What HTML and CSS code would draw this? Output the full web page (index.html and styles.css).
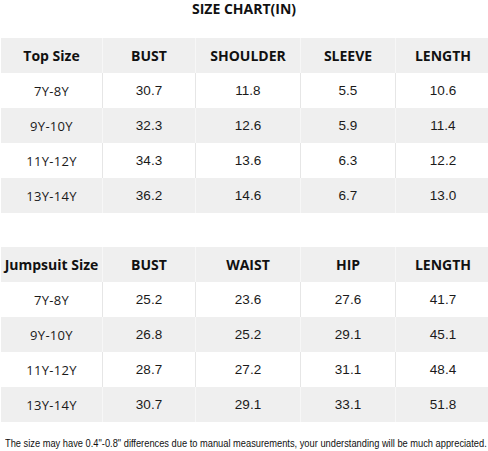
FILE: index.html
```html
<!DOCTYPE html>
<html lang="en">
<head>
    <meta charset="UTF-8">
    <title>Size Chart</title>
    <link rel="stylesheet" href="styles.css">
</head>
<body>
    <div id="chart">
        <h1 class="title">SIZE CHART(IN)</h1>
        <table class="sizeTable">
            <tr class="head">
                <th>Top Size</th><th>BUST</th><th>SHOULDER</th><th>SLEEVE</th><th>LENGTH</th>
            </tr>
            <tr><td class="size">7Y-8Y</td><td>30.7</td><td>11.8</td><td>5.5</td><td>10.6</td></tr>
            <tr><td class="size">9Y-10Y</td><td>32.3</td><td>12.6</td><td>5.9</td><td>11.4</td></tr>
            <tr><td class="size">11Y-12Y</td><td>34.3</td><td>13.6</td><td>6.3</td><td>12.2</td></tr>
            <tr><td class="size">13Y-14Y</td><td>36.2</td><td>14.6</td><td>6.7</td><td>13.0</td></tr>
        </table>
        <table class="sizeTable second">
            <tr class="head">
                <th>Jumpsuit Size</th><th>BUST</th><th>WAIST</th><th>HIP</th><th>LENGTH</th>
            </tr>
            <tr><td class="size">7Y-8Y</td><td>25.2</td><td>23.6</td><td>27.6</td><td>41.7</td></tr>
            <tr><td class="size">9Y-10Y</td><td>26.8</td><td>25.2</td><td>29.1</td><td>45.1</td></tr>
            <tr><td class="size">11Y-12Y</td><td>28.7</td><td>27.2</td><td>31.1</td><td>48.4</td></tr>
            <tr><td class="size">13Y-14Y</td><td>30.7</td><td>29.1</td><td>33.1</td><td>51.8</td></tr>
        </table>
        <p class="note"><span class="noteText">The size may have 0.4"-0.8" differences due to manual measurements, your understanding will be much appreciated.</span></p>
    </div>
</body>
</html>
```

FILE: styles.css
```css
body {
    margin: 0;
    padding: 0;
    background-color: #fff;
    color: #222;
    font-family: "Liberation Sans", Arial, sans-serif;
}
#chart {
    width: 488px;
    overflow: hidden;
}
.title {
    margin: 0;
    padding-top: 1px;
    height: 37px;
    text-align: center;
    font-family: "Open Sans", sans-serif;
    font-size: 14px;
    font-weight: bold;
    line-height: 16px;
    color: #111;
}
.sizeTable {
    margin-left: 1px;
    width: 485px;
    border-collapse: collapse;
    table-layout: fixed;
}
.second {
    margin-top: 34px;
}
.sizeTable tr {
    height: 35px;
}
.sizeTable tr:nth-child(odd) {
    background-color: #efefef;
}
.sizeTable th,
.sizeTable td {
    padding: 0;
    text-align: center;
    border-left: 1px solid #e6e6e6;
}
.sizeTable th:first-child,
.sizeTable td:first-child {
    border-left: none;
}
.sizeTable tr:nth-child(odd) td,
.sizeTable tr:nth-child(odd) th {
    border-left-color: #f7f7f7;
}
.sizeTable th:nth-child(1) { width: 101px; }
.sizeTable th:nth-child(2) { width: 92px; }
.sizeTable th:nth-child(3) { width: 104px; }
.sizeTable th:nth-child(4) { width: 94px; }
.sizeTable th:nth-child(5) { width: 94px; }
th {
    font-family: "Open Sans", sans-serif;
    font-size: 14px;
    font-weight: bold;
    color: #111;
}
td {
    font-size: 13.5px;
    color: #1a1a1a;
}
td.size {
    font-family: "Open Sans", sans-serif;
    font-size: 13px;
    letter-spacing: 0.3px;
}
.note {
    margin: 15px 0 0 5px;
    font-size: 11px;
    white-space: nowrap;
    color: #111;
}
.noteText {
    display: inline-block;
    transform: scaleX(0.845);
    transform-origin: left center;
}
```
